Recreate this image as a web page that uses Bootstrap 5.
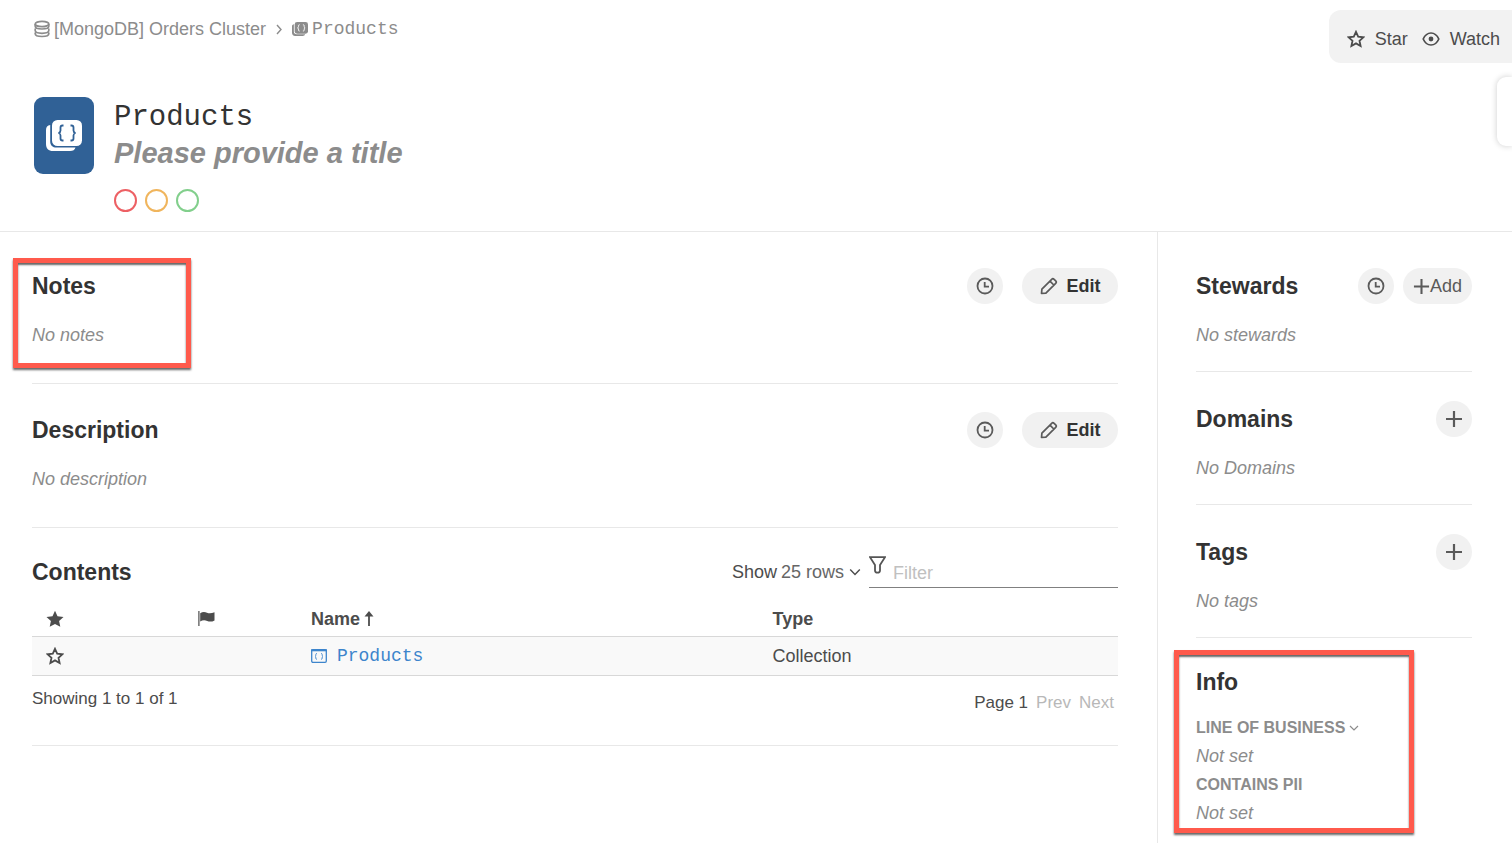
<!DOCTYPE html>
<html lang="en">
<head>
<meta charset="utf-8">
<meta name="viewport" content="width=device-width, initial-scale=1">
<title>Products</title>
<link rel="stylesheet" href="https://cdn.jsdelivr.net/npm/bootstrap@5.3.0/dist/css/bootstrap.min.css">
<style>
body { font: 18px/24px "Liberation Sans", Arial, sans-serif; color: #4c4c4c; background: #fff; overflow-x: hidden; }
svg { display: block; flex: none; }
h2 { font-size: 23px; line-height: 36px; font-weight: 700; color: #333; margin: 0; }
.mono { font-family: "Liberation Mono", "Courier New", monospace; }
.crumbs { color: #8c8c8c; padding: 17px 0 0 34px; }
.crumbs a { color: inherit; text-decoration: none; }
.crumb-sep { margin: 0 9px; }
.action-bar { background: #f2f2f2; border-radius: 12px 0 0 12px; margin-top: 10px; padding: 17px 12px 12px 18px; gap: 14px; }
.action-bar button { gap: 10px; }
.plain { border: 0; background: none; padding: 0; color: inherit; }
.object-header { padding: 34px 34px 19px; gap: 20px; border-bottom: 1px solid #e8e8e8; }
.object-icon { width: 60px; height: 77px; border-radius: 9px; background: #306196; flex: none; }
.object-name { font-size: 29px; line-height: 34px; font-weight: 400; color: #333; margin: 4px 0 0; }
.object-title { font-size: 29px; line-height: 36px; font-weight: 700; font-style: italic; color: #8c8c8c; margin: 0; }
.flags { gap: 8px; margin-top: 18px; }
.flag-dot { width: 23px; height: 23px; border-radius: 50%; border: 2px solid; background: none; padding: 0; }
.flag-red { border-color: #ed6064; }
.flag-amber { border-color: #f0b55d; }
.flag-green { border-color: #82cf8c; }
.drawer { position: absolute; top: 77px; right: 0; width: 15px; height: 69px; background: #fff; border-radius: 9px 0 0 9px; box-shadow: 0 0 6px rgba(0,0,0,.2); }
.main-col { padding: 0 39px 0 32px; min-width: 0; }
.side-col { flex: 0 0 355px; border-left: 1px solid #e8e8e8; padding: 0 40px 0 38px; }
.block { border-bottom: 1px solid #e8e8e8; padding: 28px 0 36px; }
.side-col .block { padding: 29px 0 24px; }
.main-col .block:first-child, .side-col .block:first-child { padding-top: 36px; }
.main-col .contents { padding: 22px 0 30px; }
.empty { font-style: italic; color: #8c8c8c; margin: 19px 0 0; }
.pill { height: 36px; border: 0; border-radius: 18px; background: #f1f1f1; color: #5a5a5a; padding: 0 10px; display: flex; align-items: center; justify-content: center; }
.pill-round { width: 36px; padding: 0; }
.main-col .pill-round { margin-right: 19px; }
.side-col .pill-round:not(:last-child) { margin-right: 9px; }
.pill-edit { width: 96px; gap: 9px; font-weight: 700; color: #333; }
.pill-edit svg { color: #5a5a5a; }
.rows-select { appearance: none; border: 0; background: none; padding: 0; color: #666; }
.filter-box { width: 249px; height: 36px; border-bottom: 1px solid #808080; gap: 7px; color: #555; }
.filter-box input { border: 0; outline: 0; padding: 6px 0 0; width: 100%; min-width: 0; color: #333; background: none; }
.filter-box input::placeholder { color: #c0c0c0; opacity: 1; }
.list-table { width: 100%; table-layout: fixed; margin-top: 12px; }
.list-table th, .list-table td { padding: 0 14px; border-bottom: 1px solid #d8d8d8; }
.list-table th { height: 34px; }
.list-table td { height: 39px; background: #f9f9f9; }
.list-table a { color: #3d85cc; text-decoration: none; gap: 10px; }
.pager { font-size: 17px; padding-top: 11px; }
.pager button:disabled { color: #b8b8b8; }
.info { padding-top: 26px; }
.info dl { margin: 14px 0 0; line-height: 28px; color: #8c8c8c; }
.info dt { font-size: 16px; }
.info dd { font-style: italic; margin: 0 0 1px; }
/* call-out frames over the page */
.callout { position: absolute; border: 5px solid #ff5a4c; box-shadow: 0 2px 2px rgba(0,0,0,.6), inset 0 2px 2px rgba(0,0,0,.6); pointer-events: none; }
.callout-notes { left: -19px; top: 26px; width: 178px; height: 110px; }
.callout-info { left: -22px; top: 12px; width: 240px; height: 183px; }
</style>
</head>
<body>
<svg width="0" height="0" class="position-absolute" aria-hidden="true">
  <defs>
    <symbol id="star" viewBox="0 0 18 18"><path d="M9 1.800l2.200 4.900 5.200.6-3.900 3.500 1.100 5.200L9 13.400 4.400 16l1.100-5.200L1.600 7.300l5.200-.6z" fill="none" stroke="currentColor" stroke-width="1.800"/></symbol>
    <symbol id="clock" viewBox="0 0 18 18"><g fill="none" stroke="currentColor" stroke-width="1.800"><circle cx="9" cy="9" r="7.500"/><path d="M8.700 5v4.700H13"/></g></symbol>
    <symbol id="pencil" viewBox="0 0 18 18"><path d="M1.500 16.500l.4-4.400L11.700 2.300a1.700 1.700 0 0 1 2.400 0l1.600 1.600a1.700 1.700 0 0 1 0 2.400l-9.800 9.800zM10 4.200L13.800 8" fill="none" stroke="currentColor" stroke-width="1.700" stroke-linejoin="round"/></symbol>
    <symbol id="plus" viewBox="0 0 18 18"><path d="M9 1v16M1 9h16" fill="none" stroke="currentColor" stroke-width="2.200"/></symbol>
    <symbol id="chevron" viewBox="0 0 10 10"><path d="M1 3l4 4 4-4" fill="none" stroke="currentColor" stroke-width="1.200"/></symbol>
  </defs>
</svg>
<div class="d-flex flex-column min-vh-100 position-relative">
  <header>
    <div class="d-flex justify-content-between align-items-start">
      <nav class="crumbs d-flex align-items-center" aria-label="Breadcrumb">
        <a href="#" class="d-flex align-items-center gap-1"><svg width="16" height="18" viewBox="0 0 16 18" fill="none" stroke="currentColor" stroke-width="1.700"><ellipse cx="8" cy="4" rx="6.800" ry="2.700"/><path d="M1.200 4v2.300C1.200 7.800 4.200 9 8 9s6.800-1.200 6.800-2.700V4M1.200 8.400v2.200c0 1.500 3 2.700 6.800 2.700s6.800-1.200 6.800-2.700V8.400M1.200 12.400v1.400c0 1.500 3 2.700 6.800 2.700s6.800-1.200 6.800-2.700v-1.400"/></svg>[MongoDB] Orders Cluster</a>
        <svg class="crumb-sep" width="8" height="12" viewBox="0 0 8 12"><path d="M2 2l4 4.500L2 11" fill="none" stroke="currentColor" stroke-width="1.400"/></svg>
        <a href="#" class="d-flex align-items-center gap-1"><svg width="16" height="14" viewBox="0 0 36 31"><path d="M4.200 5C1.500 5.200 0 7 0 10v14c0 4.500 2.500 7 7 7h17c3 0 4.800-1 5.500-3.500H10.500c-4 0-6.300-2.300-6.300-6.300z" fill="currentColor"/><rect x="6" width="30" height="26" rx="5.500" fill="currentColor"/><path d="M17.500 6h-1q-2 0-2 2v2.500q0 2-2 2.500 2 .5 2 2.500V18q0 2 2 2h1M24.500 6h1q2 0 2 2v2.500q0 2 2 2.500-2 .5-2 2.500V18q0 2-2 2h-1" fill="none" stroke="#fff" stroke-width="2"/></svg><span class="mono">Products</span></a>
      </nav>
      <div class="action-bar d-flex align-items-center">
        <button class="plain d-flex align-items-center"><svg width="18" height="18"><use href="#star"/></svg>Star</button>
        <button class="plain d-flex align-items-center"><svg width="18" height="18" viewBox="0 0 18 18"><path d="M1.200 9c1.800-4 4.400-6 7.800-6s6 2 7.800 6c-1.800 4-4.400 6-7.800 6S3 13 1.200 9z" fill="none" stroke="currentColor" stroke-width="1.700"/><circle cx="9" cy="9" r="2.400" fill="currentColor"/></svg>Watch</button>
      </div>
    </div>
    <div class="object-header d-flex">
      <div class="object-icon d-flex align-items-center justify-content-center">
        <svg width="36" height="31" viewBox="0 0 36 31"><path d="M4.200 5C1.500 5.200 0 7 0 10v14c0 4.500 2.500 7 7 7h17c3 0 4.800-1 5.500-3.500H10.500c-4 0-6.300-2.300-6.300-6.300z" fill="#fff"/><rect x="6" width="30" height="26" rx="5.500" fill="#fff"/><path d="M17.500 5.500h-1q-2 0-2 2v3q0 2-2 2.500 2 .5 2 2.500v3q0 2 2 2h1M24.500 5.500h1q2 0 2 2v3q0 2 2 2.500-2 .5-2 2.500v3q0 2-2 2h-1" fill="none" stroke="#306196" stroke-width="1.800"/></svg>
      </div>
      <div>
        <h1 class="object-name mono">Products</h1>
        <p class="object-title">Please provide a title</p>
        <div class="flags d-flex">
          <button class="flag-dot flag-red" aria-label="Deprecation"></button>
          <button class="flag-dot flag-amber" aria-label="Warning"></button>
          <button class="flag-dot flag-green" aria-label="Endorsement"></button>
        </div>
      </div>
    </div>
  </header>
  <div class="drawer"></div>
  <div class="d-flex flex-grow-1">
    <main class="main-col flex-grow-1">
      <section class="block position-relative">
        <div class="d-flex align-items-center">
          <h2 class="me-auto">Notes</h2>
          <button class="pill pill-round" aria-label="Notes history"><svg width="18" height="18"><use href="#clock"/></svg></button>
          <button class="pill pill-edit"><svg width="18" height="18"><use href="#pencil"/></svg>Edit</button>
        </div>
        <p class="empty">No notes</p>
        <div class="callout callout-notes"></div>
      </section>
      <section class="block">
        <div class="d-flex align-items-center">
          <h2 class="me-auto">Description</h2>
          <button class="pill pill-round" aria-label="Description history"><svg width="18" height="18"><use href="#clock"/></svg></button>
          <button class="pill pill-edit"><svg width="18" height="18"><use href="#pencil"/></svg>Edit</button>
        </div>
        <p class="empty">No description</p>
      </section>
      <section class="block contents">
        <div class="d-flex align-items-center">
          <h2 class="me-auto pt-1">Contents</h2>
          <div class="d-flex align-items-center gap-1 me-2 pt-1">
            <label for="rows">Show</label>
            <select id="rows" class="rows-select"><option>25 rows</option></select>
            <svg width="12" height="12"><use href="#chevron"/></svg>
          </div>
          <div class="filter-box d-flex">
            <svg class="mt-1" width="17" height="18" viewBox="0 0 17 18"><path d="M1 1.200h15L11 9v5.500q0 2.200-2.500 2.200T6 14.500V9z" fill="none" stroke="currentColor" stroke-width="1.800"/></svg>
            <input type="text" placeholder="Filter" aria-label="Filter">
          </div>
        </div>
        <table class="list-table">
          <colgroup><col style="width:14%"><col style="width:10.4%"><col style="width:42.5%"><col></colgroup>
          <thead><tr>
            <th scope="col" aria-label="Starred"><svg width="18" height="18" viewBox="0 0 18 18"><path d="M9 .8l2.500 5.400 6 .7-4.400 4 1.200 5.900L9 14l-5.300 2.800 1.200-5.900-4.400-4 6-.7z" fill="currentColor"/></svg></th>
            <th scope="col" aria-label="Flags"><svg width="17" height="17" viewBox="0 0 17 17"><path d="M.9 1v15" stroke="currentColor" stroke-width="1.200"/><path d="M2.200 3.200C4.500 1.600 7 1.800 9 2.700s4.500.8 7.500-.5v8.200c-2.500 1.400-5 1.500-7.300.5s-4.700-.9-7 .5z" fill="currentColor"/></svg></th>
            <th scope="col"><span class="d-flex align-items-center gap-1">Name<svg width="10" height="16" viewBox="0 0 10 16"><path d="M5 15V3" stroke="currentColor" stroke-width="1.800"/><path d="M5 0l4.500 5.500h-9z" fill="currentColor"/></svg></span></th>
            <th scope="col">Type</th>
          </tr></thead>
          <tbody><tr>
            <td><button class="plain d-block" aria-label="Star Products"><svg width="18" height="18"><use href="#star"/></svg></button></td>
            <td></td>
            <td><a href="#" class="d-flex align-items-center"><svg width="16" height="14" viewBox="0 0 16 14" fill="none" stroke="currentColor"><rect x=".7" y=".7" width="14.600" height="12.600" rx="1.200" stroke-width="1.300"/><path d="M0 1.300h16" stroke-width="2"/><path d="M6 4.500q-1.200 0-1.200 1v1.200l-.8.700.8.700v1.200q0 1 1.200 1M10 4.500q1.200 0 1.200 1v1.200l.8.700-.8.700v1.200q0 1-1.200 1" stroke-width=".9"/></svg><span class="mono">Products</span></a></td>
            <td>Collection</td>
          </tr></tbody>
        </table>
        <div class="pager d-flex justify-content-between">
          <span>Showing 1 to 1 of 1</span>
          <span class="d-flex gap-2 pt-1 pe-1"><span>Page 1</span><button class="plain" disabled>Prev</button><button class="plain" disabled>Next</button></span>
        </div>
      </section>
    </main>
    <aside class="side-col">
      <section class="block">
        <div class="d-flex align-items-center">
          <h2 class="me-auto">Stewards</h2>
          <button class="pill pill-round" aria-label="Stewards history"><svg width="18" height="18"><use href="#clock"/></svg></button>
          <button class="pill"><svg width="17" height="17"><use href="#plus"/></svg>Add</button>
        </div>
        <p class="empty">No stewards</p>
      </section>
      <section class="block">
        <div class="d-flex align-items-center">
          <h2 class="me-auto">Domains</h2>
          <button class="pill pill-round" aria-label="Add domain"><svg width="18" height="18"><use href="#plus"/></svg></button>
        </div>
        <p class="empty">No Domains</p>
      </section>
      <section class="block">
        <div class="d-flex align-items-center">
          <h2 class="me-auto">Tags</h2>
          <button class="pill pill-round" aria-label="Add tag"><svg width="18" height="18"><use href="#plus"/></svg></button>
        </div>
        <p class="empty">No tags</p>
      </section>
      <section class="info position-relative">
        <h2>Info</h2>
        <dl>
          <dt><button class="plain fw-bold d-flex align-items-center gap-1">LINE OF BUSINESS<svg width="10" height="10"><use href="#chevron"/></svg></button></dt>
          <dd>Not set</dd>
          <dt>CONTAINS PII</dt>
          <dd>Not set</dd>
        </dl>
        <div class="callout callout-info"></div>
      </section>
    </aside>
  </div>
</div>
<script src="https://cdn.jsdelivr.net/npm/bootstrap@5.3.0/dist/js/bootstrap.bundle.min.js"></script>
</body>
</html>
